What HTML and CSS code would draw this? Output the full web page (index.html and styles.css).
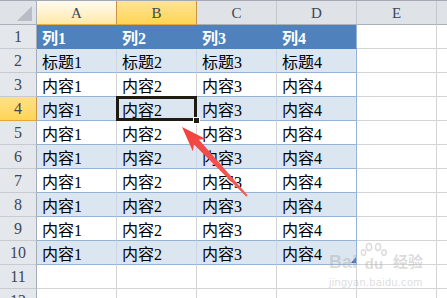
FILE: index.html
```html
<!DOCTYPE html>
<html lang="zh">
<head>
<meta charset="utf-8">
<title>Sheet</title>
<link rel="stylesheet" href="styles.css">
</head>
<body>
<div class="sheet">
  <div class="c corner"></div>
  <div class="c ch ch-hover">A</div>
  <div class="c ch ch-sel">B</div>
  <div class="c ch">C</div>
  <div class="c ch">D</div>
  <div class="c ch">E</div>
  <div class="c ch"></div>

  <div class="c rh">1</div>
  <div class="c th">列1</div><div class="c th">列2</div><div class="c th">列3</div><div class="c th td-last">列4</div>
  <div class="c"></div><div class="c"></div>

  <div class="c rh">2</div>
  <div class="c band">标题1</div><div class="c band">标题2</div><div class="c band">标题3</div><div class="c band td-last">标题4</div>
  <div class="c"></div><div class="c"></div>

  <div class="c rh">3</div>
  <div class="c plain">内容1</div><div class="c plain">内容2</div><div class="c plain">内容3</div><div class="c plain td-last">内容4</div>
  <div class="c"></div><div class="c"></div>

  <div class="c rh rh-sel">4</div>
  <div class="c band">内容1</div><div class="c band active">内容2</div><div class="c band">内容3</div><div class="c band td-last">内容4</div>
  <div class="c"></div><div class="c"></div>

  <div class="c rh">5</div>
  <div class="c plain">内容1</div><div class="c plain">内容2</div><div class="c plain">内容3</div><div class="c plain td-last">内容4</div>
  <div class="c"></div><div class="c"></div>

  <div class="c rh">6</div>
  <div class="c band">内容1</div><div class="c band">内容2</div><div class="c band">内容3</div><div class="c band td-last">内容4</div>
  <div class="c"></div><div class="c"></div>

  <div class="c rh">7</div>
  <div class="c plain">内容1</div><div class="c plain">内容2</div><div class="c plain">内容3</div><div class="c plain td-last">内容4</div>
  <div class="c"></div><div class="c"></div>

  <div class="c rh">8</div>
  <div class="c band">内容1</div><div class="c band">内容2</div><div class="c band">内容3</div><div class="c band td-last">内容4</div>
  <div class="c"></div><div class="c"></div>

  <div class="c rh">9</div>
  <div class="c plain">内容1</div><div class="c plain">内容2</div><div class="c plain">内容3</div><div class="c plain td-last">内容4</div>
  <div class="c"></div><div class="c"></div>

  <div class="c rh">10</div>
  <div class="c band">内容1</div><div class="c band">内容2</div><div class="c band">内容3</div><div class="c band td-last td-end">内容4</div>
  <div class="c"></div><div class="c"></div>

  <div class="c rh">11</div>
  <div class="c"></div><div class="c"></div><div class="c"></div><div class="c"></div><div class="c"></div><div class="c"></div>

  <div class="c rh">12</div>
  <div class="c"></div><div class="c"></div><div class="c"></div><div class="c"></div><div class="c"></div><div class="c"></div>
</div>

<svg class="arrow" width="447" height="298" viewBox="0 0 447 298">
  <defs>
    <linearGradient id="ag" x1="0" y1="0" x2="1" y2="1">
      <stop offset="0" stop-color="#f3413d"/>
      <stop offset="1" stop-color="#f0605a"/>
    </linearGradient>
  </defs>
  <polygon fill="url(#ag)" points="182,127 205.8,138.9 199,139.8 247.7,195.3 246.3,196.7 194,144.6 192.8,151.3"/>
</svg>

<div class="watermark">
  <div class="wm-top">
    <span class="wm-bai">Bai</span>
    <span class="wm-paw">
      <svg class="toes" width="28" height="14" viewBox="0 0 28 14">
        <ellipse cx="9" cy="5" rx="2.6" ry="3.4" fill="none" stroke="currentColor" stroke-width="1.5"/>
        <ellipse cx="18" cy="5" rx="2.6" ry="3.4" fill="none" stroke="currentColor" stroke-width="1.5"/>
        <ellipse cx="3.5" cy="10.5" rx="2.2" ry="2.8" fill="none" stroke="currentColor" stroke-width="1.4"/>
        <ellipse cx="24" cy="10.5" rx="2.2" ry="2.8" fill="none" stroke="currentColor" stroke-width="1.4"/>
      </svg>
      <span class="wm-du">du</span>
    </span>
    <span class="wm-jy">经验</span>
  </div>
  <div class="wm-url">jingyan.baidu.com</div>
</div>
</body>
</html>
```

FILE: styles.css
```css
html, body {
  margin: 0;
  padding: 0;
  background: #ffffff;
  overflow: hidden;
}

body {
  position: relative;
  width: 447px;
  height: 298px;
}

.sheet {
  display: grid;
  grid-template-columns: 37px repeat(6, 80px);
  grid-auto-rows: 24px;
  border-top: 1px solid #a3aab4;
  width: max-content;
  font-family: "Liberation Serif", "Noto Sans CJK SC", serif;
  font-size: 16px;
  color: #000;
}

.c {
  box-sizing: border-box;
  border-right: 1px solid #d4d4d4;
  border-bottom: 1px solid #d4d4d4;
  display: flex;
  align-items: center;
  padding-left: 5px;
  padding-top: 1px;
  white-space: nowrap;
  overflow: hidden;
  position: relative;
}

/* corner */
.corner {
  background: #dfe3e8;
  border-right-color: #a9b0ba;
  border-bottom-color: #a9b0ba;
}
.corner::after {
  content: "";
  position: absolute;
  right: 4px;
  bottom: 3px;
  width: 0;
  height: 0;
  border-left: 15px solid transparent;
  border-bottom: 15px solid #b8bdc5;
}

/* column headers */
.ch {
  justify-content: center;
  padding-left: 0;
  font-size: 15px;
  color: #3d4757;
  background: #dfe3e8;
  border-right-color: #c3c9d1;
  border-bottom-color: #a9b0ba;
}
.ch-hover {
  background: linear-gradient(#fffbf0, #ffe9a8);
  border-right-color: #c7944a;
  border-bottom-color: #e6ae45;
}
.ch-sel {
  background: linear-gradient(#ffe39a, #ffd553);
  border-right-color: #c7944a;
  border-bottom-color: #e6a53a;
}

/* row headers */
.rh {
  justify-content: center;
  padding-left: 0;
  font-size: 16px;
  color: #3d4757;
  background: #e4e7eb;
  border-right-color: #a3acb8;
  border-bottom-color: #c6cbd2;
}
.rh-sel {
  background: linear-gradient(#ffe08a, #ffd555);
  border-right-color: #c7944a;
  border-bottom-color: #e6a53a;
}

/* table */
.th {
  background: #4f81bd;
  color: #ffffff;
  font-weight: bold;
  border-right-color: #4f81bd;
  border-bottom-color: #4f81bd;
}
.band {
  background: #dce6f1;
  border-right-color: #ccd5e1;
  border-bottom-color: #95b3d7;
}
.plain {
  background: #ffffff;
  border-right-color: #d4d4d4;
  border-bottom-color: #95b3d7;
}
.td-last {
  border-right-color: #95b3d7;
}
.th.td-last {
  border-right-color: #95b3d7;
}

/* resize handle of table */
.td-end::after {
  content: "";
  position: absolute;
  right: 0;
  bottom: 1px;
  width: 0;
  height: 0;
  border-left: 5px solid transparent;
  border-bottom: 6px solid #3a5fbf;
}

/* active cell */
.active {
  overflow: visible;
  z-index: 2;
}
.active::before {
  content: "";
  position: absolute;
  left: -1px;
  top: -1px;
  right: -1px;
  bottom: -1px;
  border: 3px solid #1f1a12;
}
.active::after {
  content: "";
  position: absolute;
  right: -4px;
  bottom: -4px;
  width: 5px;
  height: 5px;
  background: #1f1a12;
  border: 1px solid #ffffff;
}

/* overlays */
.arrow {
  position: absolute;
  left: 0;
  top: 0;
  pointer-events: none;
  z-index: 5;
}

.watermark {
  position: absolute;
  left: 329px;
  top: 243px;
  z-index: 4;
  color: rgba(170, 170, 170, 0.42);
  font-family: "Liberation Sans", "Noto Sans CJK SC", sans-serif;
  pointer-events: none;
}
.wm-top {
  display: flex;
  align-items: flex-end;
  height: 30px;
}
.wm-bai {
  font-size: 18px;
  font-weight: bold;
  line-height: 18px;
  margin-bottom: 2px;
}
.wm-paw {
  display: flex;
  flex-direction: column;
  align-items: center;
  width: 30px;
  margin-left: 2px;
}
.toes {
  display: block;
}
.wm-du {
  font-size: 15px;
  font-weight: bold;
  line-height: 15px;
  margin-bottom: 2px;
}
.wm-jy {
  font-size: 15px;
  line-height: 16px;
  margin-left: 4px;
  margin-bottom: 3px;
  font-weight: bold;
}
.wm-url {
  font-size: 11px;
  margin-top: 3px;
  letter-spacing: 0.3px;
}
```
